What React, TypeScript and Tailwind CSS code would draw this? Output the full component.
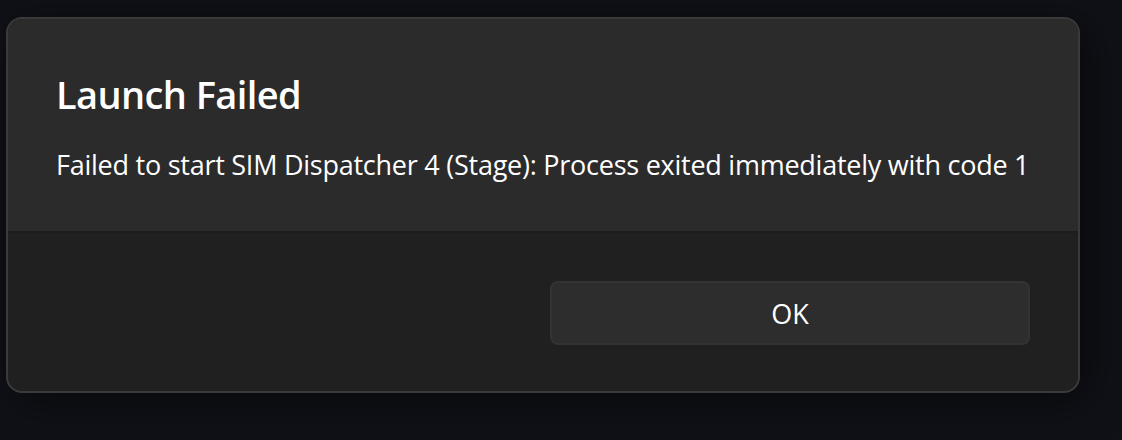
import React from 'react';

const font = { fontFamily: '"Open Sans", "Noto Sans", "Liberation Sans", sans-serif' };

export default function App() {
  return (
    <div
      className="w-[1122px] h-[440px] bg-[#101117] pt-[17px] pl-[6px] overflow-hidden"
      style={font}
    >
      <div className="w-[1074px] h-[376px] rounded-[16px] border-2 border-[#3a3a3a] bg-[#202020] overflow-hidden flex flex-col shadow-[8px_8px_40px_rgba(0,0,0,0.5)]">
        <div className="h-[214px] bg-[#2b2b2b] border-b-2 border-[#1d1d1d] px-[48px] pt-[56px]">
          <h1 className="text-[38px] leading-[38px] font-semibold tracking-[-0.6px] text-white">Launch Failed</h1>
          <p className="mt-[34px] text-[27px] leading-[36px] tracking-[-0.25px] text-white whitespace-nowrap">
            Failed to start SIM Dispatcher 4 (Stage): Process exited immediately with code 1
          </p>
        </div>
        <div className="flex-1 flex justify-end items-start pt-[48px] pr-[48px]">
          <button className="w-[480px] h-[64px] rounded-[8px] bg-[#2d2d2d] border-2 border-[#333333] text-white text-[27px] leading-none">
            OK
          </button>
        </div>
      </div>
    </div>
  );
}
